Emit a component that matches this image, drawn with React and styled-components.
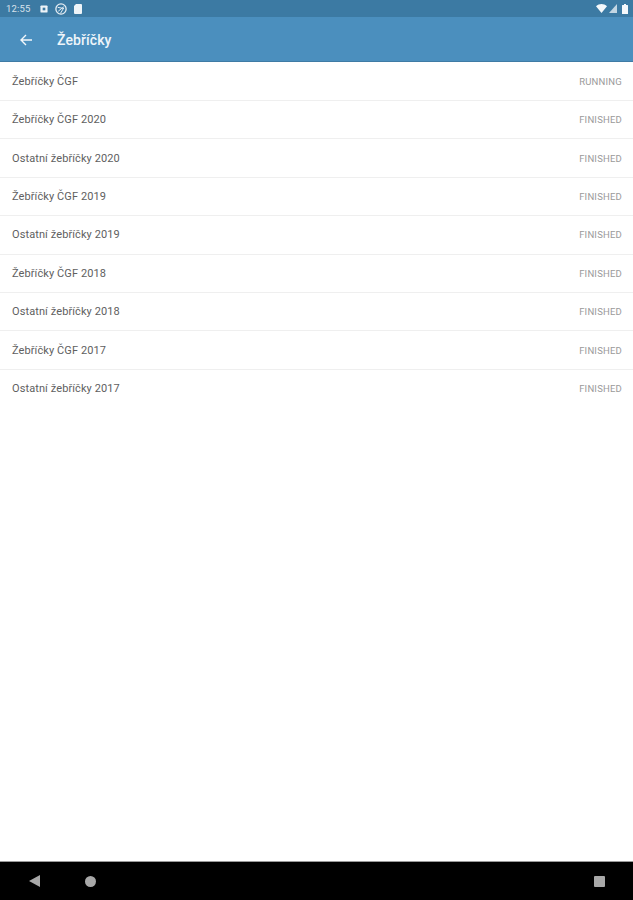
import React from 'react';
import styled, { createGlobalStyle } from 'styled-components';

const Global = createGlobalStyle`
  html, body { margin: 0; padding: 0; background: #fff; }
  body { font-family: Roboto, "Liberation Sans", sans-serif; }
`;

const Screen = styled.div`
  width: 633px;
  height: 900px;
  display: flex;
  flex-direction: column;
  overflow: hidden;
  background: #fff;
`;

const StatusBar = styled.div`
  height: 17px;
  flex: none;
  background: #3c7aa3;
  display: flex;
  align-items: center;
  justify-content: space-between;
  padding: 0 5px 0 6px;
  color: #e6eef4;
`;

const StatusGroup = styled.div`
  display: flex;
  align-items: center;
  gap: ${p => p.$gap}px;
`;

const Clock = styled.span`
  font-size: 9.5px;
  width: 26px;
  margin-right: 1px;
  letter-spacing: 0.2px;
  opacity: 0.9;
`;

const AppBar = styled.header`
  height: 45px;
  flex: none;
  box-sizing: border-box;
  background: #4b8fbe;
  border-bottom: 1px solid #3f7ba5;
  display: flex;
  align-items: center;
  padding: 1px 0 0 19px;
  gap: 24px;
  color: #fff;
`;

const Title = styled.h1`
  margin: 0;
  font-size: 14px;
  font-weight: 500;
  letter-spacing: 0.1px;
  color: #eef5fa;
`;

const List = styled.ul`
  list-style: none;
  margin: 0;
  padding: 0.7px 0 0;
  flex: 1;
`;

const Row = styled.li`
  height: 37.4px;
  box-sizing: content-box;
  display: flex;
  align-items: center;
  justify-content: space-between;
  padding: 0 11px 0 12px;
  border-bottom: 1px solid #efefef;
  &:last-child { border-bottom: none; }
`;

const RowName = styled.span`
  font-size: 11px;
  color: #606060;
  letter-spacing: 0.1px;
`;

const RowState = styled.span`
  font-size: 9.5px;
  color: #9a9a9a;
  letter-spacing: 0.2px;
`;

const NavBar = styled.nav`
  height: 39px;
  flex: none;
  background: #000;
  border-top: 1px solid #9a9a9a;
  box-sizing: border-box;
  display: grid;
  grid-template-columns: 68px 45px 1fr 67px;
  align-items: center;
  justify-items: center;
`;

const Icon = styled.svg`
  display: block;
`;

const SignalIcon = styled(Icon)`
  margin-right: 3px;
`;

const rows = [
  ['Žebříčky ČGF', 'RUNNING'],
  ['Žebříčky ČGF 2020', 'FINISHED'],
  ['Ostatní žebříčky 2020', 'FINISHED'],
  ['Žebříčky ČGF 2019', 'FINISHED'],
  ['Ostatní žebříčky 2019', 'FINISHED'],
  ['Žebříčky ČGF 2018', 'FINISHED'],
  ['Ostatní žebříčky 2018', 'FINISHED'],
  ['Žebříčky ČGF 2017', 'FINISHED'],
  ['Ostatní žebříčky 2017', 'FINISHED'],
];

export default function App() {
  return (
    <Screen>
      <Global />
      <StatusBar>
        <StatusGroup $gap={7}>
          <Clock>12:55</Clock>
          <Icon width="8" height="8" viewBox="0 0 9 9">
            <rect x="0.5" y="0.5" width="8" height="8" rx="1" fill="#eef4f8" />
            <rect x="3" y="3" width="3" height="3" fill="#3c7aa3" />
          </Icon>
          <Icon width="12" height="12" viewBox="0 0 11 11" fill="none" stroke="#e6eef4">
            <circle cx="5.5" cy="5.5" r="4.7" strokeWidth="1.2" />
            <path d="M2.5 4l5.5 1M3 7.5l5-4M5 9.500l3-5" strokeWidth="0.9" />
          </Icon>
          <Icon width="8" height="10" viewBox="0 0 8 10">
            <path d="M2 0h5a1 1 0 0 1 1 1v8a1 1 0 0 1-1 1H1a1 1 0 0 1-1-1V2z" fill="#eef4f8" />
          </Icon>
        </StatusGroup>
        <StatusGroup $gap={2}>
          <Icon width="11" height="9" viewBox="0 0 11 9">
            <path d="M0 2.2C3.2-.7 7.800-.7 11 2.2L5.500 9z" fill="#f4f8fb" />
          </Icon>
          <SignalIcon width="8" height="9" viewBox="0 0 8 9">
            <path d="M8 0v9H0z" fill="#c3d6e3" />
          </SignalIcon>
          <Icon width="6" height="10" viewBox="0 0 6 10">
            <path d="M2 0h2v1h1.500a.5.5 0 0 1 .5.5V10H0V1.500a.5.5 0 0 1 .5-.5H2z" fill="#f4f8fb" />
          </Icon>
        </StatusGroup>
      </StatusBar>
      <AppBar>
        <Icon width="14" height="14" viewBox="0 0 14 14" fill="none" stroke="#f2f7fb" strokeWidth="1.4">
          <path d="M13 7H2M7 2 2 7l5 5" />
        </Icon>
        <Title>Žebříčky</Title>
      </AppBar>
      <List>
        {rows.map(([name, state]) => (
          <Row key={name}>
            <RowName>{name}</RowName>
            <RowState>{state}</RowState>
          </Row>
        ))}
      </List>
      <NavBar>
        <Icon width="11" height="12" viewBox="0 0 11 12">
          <path d="M11 0v12L0 6z" fill="#a8a8a8" />
        </Icon>
        <Icon width="11" height="11" viewBox="0 0 11 11">
          <circle cx="5.500" cy="5.500" r="5.500" fill="#a8a8a8" />
        </Icon>
        <span />
        <Icon width="11" height="11" viewBox="0 0 11 11">
          <rect width="11" height="11" rx="1" fill="#a8a8a8" />
        </Icon>
      </NavBar>
    </Screen>
  );
}
